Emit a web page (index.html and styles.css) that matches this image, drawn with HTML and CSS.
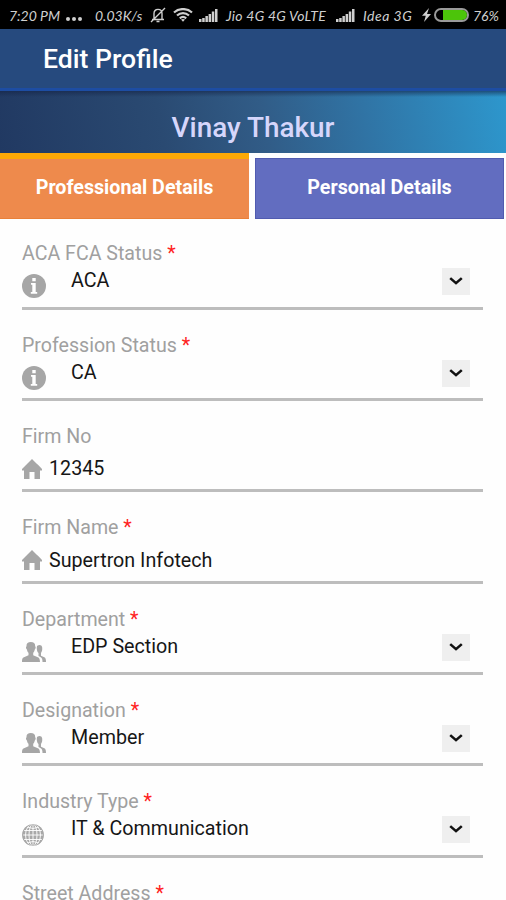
FILE: index.html
```html
<!DOCTYPE html>
<html lang="en">
<head>
  <meta charset="UTF-8">
  <meta name="viewport" content="width=device-width, initial-scale=1.0">
  <link rel="stylesheet" href="styles.css">
  <title>Edit Profile</title>
</head>
<body>
  <svg class="sprite" width="0" height="0">
    <symbol id="info" viewBox="0 0 24 24">
      <circle cx="12" cy="12" r="12" fill="#a6a6a6"/>
      <path d="M10.300 4h3.400v3.200h-3.400zM9 9h4.700v9h1.500v1.700H8.800V18h1.500v-7.300H9z" fill="#fff"/>
    </symbol>
    <symbol id="home" viewBox="0 0 20 20">
      <path d="M10 0l4.500 4.500 2 1.700L20 10v1.500h-2V20h-5.500v-7h-5v7H2v-8.500H0V10z" fill="#a6a6a6"/>
    </symbol>
    <symbol id="users" viewBox="0 0 24 20">
      <path d="M14.800 5c.5-2.700 5.200-2.700 5.400.5.2 2.500-.2 4-1.200 5.500v2.700l3.300 1.500c1.200.6 1.700 1.600 1.700 4.800h-3.500c0-3-.5-4.200-2.200-5.100l-1.800-1v-3C15 10 14.600 7 14.800 5z" fill="#a6a6a6"/>
      <path d="M4.500 4.200C4.300 1.300 6.100 0 8.800 0s4.600 1.300 4.400 4.200c.9 1 .4 2.600-.4 3.200-.3 1.600-.9 2.600-1.600 3.300v2.600l4.600 2c1.600.7 2 1.700 2.200 4.700H0c0-3 .4-4 2-4.700l4.500-2v-2.600c-.8-.7-1.300-1.700-1.600-3.300-.9-.6-1.300-2.200-.4-3.200z" fill="#a6a6a6"/>
    </symbol>
    <symbol id="globe" viewBox="0 0 22 22">
      <circle cx="11" cy="11" r="10.800" fill="#a8a8a8"/>
      <g fill="none" stroke="#fff" stroke-width=".9">
        <path d="M11 0v22M1 11h20M2 6.500h18M2 15.500h18M5 3q6 3 12 0M5 19q6-3 12 0"/>
        <ellipse cx="11" cy="11" rx="4" ry="11"/>
        <ellipse cx="11" cy="11" rx="7.500" ry="11"/>
      </g>
      <circle cx="11" cy="11" r="10.400" fill="none" stroke="#a8a8a8" stroke-width=".8"/>
    </symbol>
    <symbol id="signal" viewBox="0 0 19 13">
      <path d="M0 10h2.500v3H0zM3.200 9h2.500v4H3.200zM6.400 7h2.500v6H6.400zM9.600 5h2.500v8H9.600zM12.800 2.500h2.500V13h-2.500zM16 0h2.500v13H16z" fill="#cfcfcf"/>
    </symbol>
    <symbol id="arrow" viewBox="0 0 28 28">
      <path d="M8 10.500l6 5.200 6-5.200" fill="none" stroke="#111" stroke-width="2.700"/>
    </symbol>
  </svg>

  <div class="status-bar">
    <span class="time">7:20 PM</span>
    <span class="dots"><i></i><i></i><i></i></span>
    <span class="speed">0.03K/s</span>
    <svg class="bell" viewBox="0 0 16 16">
      <path d="M2 12.500h12M4 12V6.500C4 1 12 1 12 6.500V12M6.500 14.500h3M15 1L1 15" fill="none" stroke="#cfcfcf" stroke-width="1.400"/>
    </svg>
    <svg class="wifi" viewBox="0 0 20 14">
      <g fill="none" stroke="#cfcfcf" stroke-width="2.200">
        <path d="M1 4.500c5-4.600 13-4.600 18 0M4 7.500c3.500-3.200 8.500-3.200 12 0M6.800 10.300c2-1.700 4.400-1.700 6.400 0"/>
      </g>
      <path d="M8 11.500q2-1.200 4 0l-2 2.300z" fill="#cfcfcf"/>
    </svg>
    <svg class="signal"><use href="#signal"/></svg>
    <span class="sim-one">Jio 4G 4G VoLTE</span>
    <svg class="signal"><use href="#signal"/></svg>
    <span class="sim-two">Idea 3G</span>
    <svg class="bolt" viewBox="0 0 9 14"><path d="M7 0L0 7.800h3.800L2 14l7-8H5z" fill="#cfcfcf"/></svg>
    <span class="battery"><span class="level"></span></span>
    <span class="percent">76%</span>
  </div>

  <div class="app-bar">Edit Profile</div>
  <div class="banner">Vinay Thakur</div>

  <div class="tabs">
    <div class="tab active">Professional Details</div>
    <div class="tab">Personal Details</div>
  </div>

  <div class="form">
    <div class="field select">
      <label>ACA FCA Status <b>*</b></label>
      <div class="row">
        <svg class="icon info"><use href="#info"/></svg>
        <span class="value">ACA</span>
        <svg class="arrow"><use href="#arrow"/></svg>
      </div>
    </div>
    <div class="field select">
      <label>Profession Status <b>*</b></label>
      <div class="row">
        <svg class="icon info"><use href="#info"/></svg>
        <span class="value">CA</span>
        <svg class="arrow"><use href="#arrow"/></svg>
      </div>
    </div>
    <div class="field">
      <label>Firm No</label>
      <div class="row">
        <svg class="icon home"><use href="#home"/></svg>
        <span class="value">12345</span>
      </div>
    </div>
    <div class="field">
      <label>Firm Name <b>*</b></label>
      <div class="row">
        <svg class="icon home"><use href="#home"/></svg>
        <span class="value">Supertron Infotech</span>
      </div>
    </div>
    <div class="field select">
      <label>Department <b>*</b></label>
      <div class="row">
        <svg class="icon users"><use href="#users"/></svg>
        <span class="value">EDP Section</span>
        <svg class="arrow"><use href="#arrow"/></svg>
      </div>
    </div>
    <div class="field select">
      <label>Designation <b>*</b></label>
      <div class="row">
        <svg class="icon users"><use href="#users"/></svg>
        <span class="value">Member</span>
        <svg class="arrow"><use href="#arrow"/></svg>
      </div>
    </div>
    <div class="field select">
      <label>Industry Type <b>*</b></label>
      <div class="row">
        <svg class="icon globe"><use href="#globe"/></svg>
        <span class="value">IT &amp; Communication</span>
        <svg class="arrow"><use href="#arrow"/></svg>
      </div>
    </div>
    <div class="field last">
      <label>Street Address <b>*</b></label>
    </div>
  </div>
</body>
</html>
```

FILE: styles.css
```css
* {
  box-sizing: border-box;
}

body {
  margin: 0;
  height: 900px;
  overflow: hidden;
  background-color: #fefefe;
  font-family: Roboto, sans-serif;
}

.sprite {
  display: block;
}

svg {
  flex: none;
}

.status-bar {
  display: flex;
  align-items: center;
  height: 29px;
  padding: 1px 0 0 9px;
  background-color: #000;
  color: #cfcfcf;
  font-family: Lato, sans-serif;
  font-size: 14px;
  font-style: italic;
  white-space: nowrap;
}

.status-bar span {
  flex: none;
}

.time {
  width: 57px;
}

.dots {
  display: flex;
  gap: 2px;
  width: 29px;
  padding-top: 7px;
}

.dots i {
  width: 4px;
  height: 4px;
  border-radius: 50%;
  background-color: #cfcfcf;
}

.speed {
  width: 55px;
}

.bell {
  width: 16px;
  height: 16px;
  margin-right: 7px;
}

.wifi {
  width: 20px;
  height: 14px;
  margin-right: 6px;
}

.signal {
  width: 19px;
  height: 13px;
  margin-right: 8px;
}

.sim-one {
  width: 110px;
  letter-spacing: 0.25px;
}

.sim-two {
  width: 59px;
  letter-spacing: 0.5px;
}

.bolt {
  width: 9px;
  height: 14px;
  margin-right: 3px;
}

.battery {
  width: 35px;
  height: 14px;
  margin-right: 4px;
  padding: 0 0 0 7px;
  border: 2px solid #9a9a9a;
  border-radius: 7px;
}

.level {
  display: block;
  height: 10px;
  border-radius: 0 5px 5px 0;
  background-color: #4cc40a;
}

.app-bar {
  height: 62px;
  padding-left: 43px;
  border-bottom: 3px solid #1d4da3;
  background-color: #264a7e;
  color: #fff;
  font-size: 26.6px;
  font-weight: 500;
  line-height: 60px;
}

.banner {
  height: 62px;
  background: linear-gradient(to bottom, rgba(20, 35, 70, 0.6), rgba(20, 35, 70, 0) 6px),
    linear-gradient(80deg, #213962 0%, #2a4a72 32%, #315c87 52%, #3074a5 72%, #2d97cd 100%);
  color: #d6d6fb;
  font-size: 27.9px;
  font-weight: 500;
  line-height: 74px;
  text-align: center;
}

.tabs {
  display: flex;
  gap: 6px;
  height: 66px;
}

.tab {
  width: 249px;
  height: 61px;
  margin-top: 5px;
  border: 1px solid #505bb0;
  background-color: #626dc0;
  color: #fff;
  font-size: 19.7px;
  font-weight: 700;
  line-height: 58px;
  text-align: center;
}

.tab.active {
  height: 66px;
  margin-top: 0;
  border: 0;
  border-top: 6px solid #fda906;
  border-bottom: 1px solid #e98038;
  background-color: #ee8a4c;
}

.form {
  padding: 0 23px 0 22px;
}

.field {
  height: 91.4px;
  padding-top: 23px;
  border-bottom: 3px solid #bdbdbd;
}

.field:first-child {
  height: 90.5px;
  padding-top: 22px;
}

.field.last {
  height: 42px;
  border-bottom: 0;
}

label {
  display: block;
  height: 24px;
  color: #a0a0a0;
  font-size: 19.6px;
  line-height: 26px;
}

.last label {
  height: 18px;
}

label b {
  color: #f22;
  font-weight: 400;
}

.row {
  display: flex;
  height: 42px;
  align-items: center;
}

.value {
  flex: 1;
  color: #161616;
  font-size: 19.7px;
  line-height: 26px;
}

.field:not(.select) .value {
  padding-top: 1px;
}

.icon {
  height: 24px;
}

.select .row {
  align-items: flex-start;
}

.select .value {
  margin-top: 3px;
}

.info {
  width: 24px;
  margin: 9px 25px 0 0;
}

.home {
  width: 20px;
  height: 20px;
  margin-right: 7px;
}

.users {
  width: 24px;
  height: 20px;
  margin: 11px 25px 0 0;
}

.globe {
  width: 22px;
  height: 22px;
  margin: 11px 27px 0 0;
}

.arrow {
  width: 28px;
  height: 27px;
  margin: 3px 13px 0 0;
  background-color: #efefef;
}
```
